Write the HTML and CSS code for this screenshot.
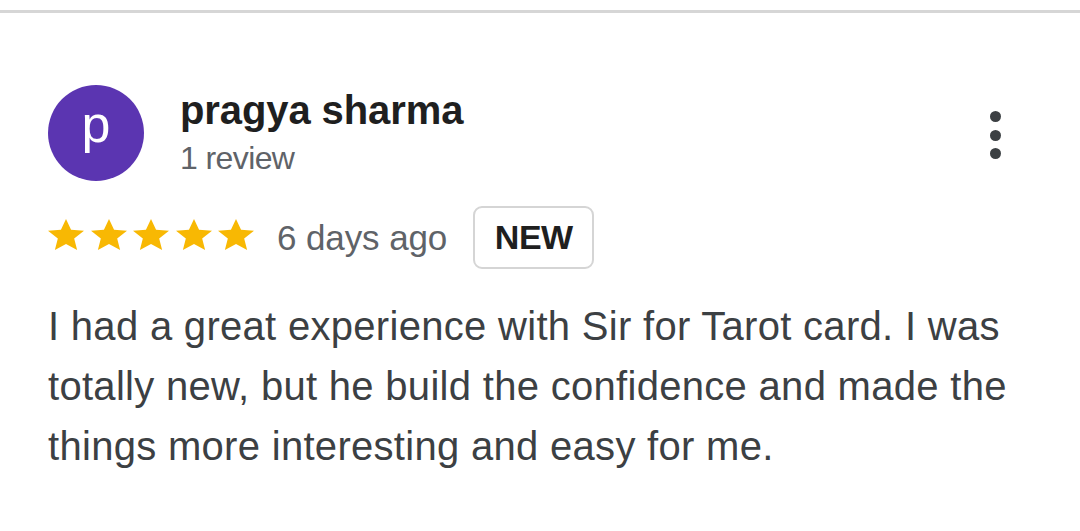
FILE: index.html
```html
<!DOCTYPE html>
<html>
<head>
<meta charset="utf-8">
<link rel="stylesheet" href="styles.css">
</head>
<body>
<div class="rule"></div>
<div class="review">
  <div class="head">
    <div class="avatar">p</div>
    <div class="who">
      <div class="name">pragya sharma</div>
      <div class="count">1 review</div>
    </div>
    <div class="more"><span></span><span></span><span></span></div>
  </div>
  <div class="meta">
    <div class="stars">
      <svg viewBox="2 2 20 19" preserveAspectRatio="none" class="star"><path d="M12 17.27L18.18 21l-1.64-7.03L22 9.24l-7.19-.61L12 2 9.19 8.63 2 9.24l5.46 4.73L5.82 21z"/></svg>
      <svg viewBox="2 2 20 19" preserveAspectRatio="none" class="star"><path d="M12 17.27L18.18 21l-1.64-7.03L22 9.24l-7.19-.61L12 2 9.19 8.63 2 9.24l5.46 4.73L5.82 21z"/></svg>
      <svg viewBox="2 2 20 19" preserveAspectRatio="none" class="star"><path d="M12 17.27L18.18 21l-1.64-7.03L22 9.24l-7.19-.61L12 2 9.19 8.63 2 9.24l5.46 4.73L5.82 21z"/></svg>
      <svg viewBox="2 2 20 19" preserveAspectRatio="none" class="star"><path d="M12 17.27L18.18 21l-1.64-7.03L22 9.24l-7.19-.61L12 2 9.19 8.63 2 9.24l5.46 4.73L5.82 21z"/></svg>
      <svg viewBox="2 2 20 19" preserveAspectRatio="none" class="star"><path d="M12 17.27L18.18 21l-1.64-7.03L22 9.24l-7.19-.61L12 2 9.19 8.63 2 9.24l5.46 4.73L5.82 21z"/></svg>
    </div>
    <div class="date">6 days ago</div>
    <div class="badge">NEW</div>
  </div>
  <p class="text">I had a great experience with Sir for Tarot card. I was totally new, but he build the confidence and made the things more interesting and easy for me.</p>
</div>
</body>
</html>
```
FILE: styles.css
```css
html, body {
  margin: 0;
  padding: 0;
  background: #fff;
}
body {
  font-family: "Liberation Sans", Arial, sans-serif;
  width: 1080px;
  height: 531px;
  overflow: hidden;
}
.rule {
  margin-top: 10px;
  height: 3px;
  background: #d6d6d6;
}
.review {
  padding: 0 48px;
}
.head {
  display: flex;
  align-items: flex-start;
  margin-top: 72px;
}
.avatar {
  width: 96px;
  height: 96px;
  border-radius: 50%;
  background: #5b35b1;
  color: #fff;
  font-size: 52px;
  line-height: 78px;
  text-align: center;
  flex: none;
}
.who {
  margin-left: 36px;
  flex: 1;
  padding-top: 2px;
}
.name {
  font-size: 40px;
  font-weight: 700;
  color: #1f1f1f;
  line-height: 46px;
  letter-spacing: -0.1px;
}
.count {
  margin-top: 5px;
  font-size: 32px;
  color: #5f6368;
  line-height: 40px;
  letter-spacing: -0.6px;
}
.more {
  display: flex;
  flex-direction: column;
  gap: 7.5px;
  margin-top: 26px;
  margin-right: 31px;
}
.more span {
  width: 11px;
  height: 11px;
  border-radius: 50%;
  background: #3c4043;
}
.meta {
  display: flex;
  align-items: center;
  margin-top: 25px;
}
.stars {
  display: flex;
  gap: 6.5px;
  margin-bottom: 6px;
}
.star {
  width: 36px;
  height: 31px;
  fill: #f8b803;
}
.date {
  margin-left: 23px;
  font-size: 35px;
  line-height: 40px;
  color: #5f6368;
  letter-spacing: -0.1px;
}
.badge {
  margin-left: 26px;
  border: 2px solid #d5d5d5;
  border-radius: 9px;
  height: 63px;
  width: 121px;
  box-sizing: border-box;
  display: flex;
  align-items: center;
  justify-content: center;
  font-size: 34px;
  font-weight: 700;
  color: #1f1f1f;
  letter-spacing: -0.5px;
}
.text {
  margin: 27px 0 0;
  font-size: 40px;
  line-height: 60px;
  color: #3c4043;
  letter-spacing: 0.3px;
}
```
